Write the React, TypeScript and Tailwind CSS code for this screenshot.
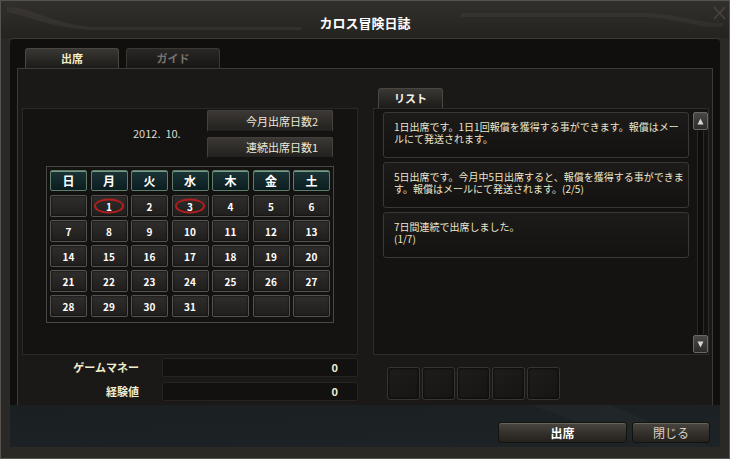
import React from "react";

const weeks: (number | null)[][] = [
  [null, 1, 2, 3, 4, 5, 6],
  [7, 8, 9, 10, 11, 12, 13],
  [14, 15, 16, 17, 18, 19, 20],
  [21, 22, 23, 24, 25, 26, 27],
  [28, 29, 30, 31, null, null, null],
];

const weekdays = ["日", "月", "火", "水", "木", "金", "土"];
const attended = [1, 3];

const listItems = [
  ["1日出席です。1日1回報償を獲得する事ができます。報償はメー", "ルにて発送されます。"],
  ["5日出席です。今月中5日出席すると、報償を獲得する事ができま", "す。報償はメールにて発送されます。(2/5)"],
  ["7日間連続で出席しました。", "(1/7)"],
];

const Tab = ({ label, active }: { label: string; active?: boolean }) => (
  <div
    className={`w-[94px] h-[20px] flex items-center justify-center rounded-t-[3px] border border-b-0 text-[11px] font-bold ${
      active
        ? "border-[#4a4743] bg-gradient-to-b from-[#3a3835] to-[#1d1b19] text-[#f2eec4]"
        : "border-[#3a3835] bg-gradient-to-b from-[#2a2826] to-[#181614] text-[#77746e]"
    }`}
  >
    {label}
  </div>
);

const HeaderCell = ({ label }: { label: string }) => (
  <div className="h-[21px] flex items-center justify-center rounded-[2px] border border-[#5f7d6b] bg-gradient-to-b from-[#1a3436] to-[#0c1d20] text-[12px] font-bold text-white shadow-[inset_0_1px_0_#7a9a88]">
    {label}
  </div>
);

const DayCell = ({ day }: { day: number | null }) => (
  <div className="relative h-[22px] flex items-center justify-center rounded-[2px] border border-[#55534f] bg-gradient-to-b from-[#302e2c] to-[#1f1e1c] text-[10px] font-bold text-white shadow-[inset_0_0_2px_#000]">
    {day}
    {day !== null && attended.includes(day) && (
      <span className="absolute left-1/2 top-1/2 w-[30px] h-[15px] -translate-x-1/2 -translate-y-1/2 rounded-[50%] border-2 border-[#b41e1e]" />
    )}
  </div>
);

const StatButton = ({ label }: { label: string }) => (
  <div className="h-full flex items-center justify-end pr-[14px] rounded-[2px] border border-[#45423e] border-b-[#111] bg-gradient-to-b from-[#3b3835] to-[#23211e] text-[11px] text-[#ede9d8]">
    {label}
  </div>
);

const ListItem = ({ lines }: { lines: string[] }) => (
  <div className="h-[46px] pl-[10px] pt-[8px] rounded-[3px] border border-[#3a3835] bg-gradient-to-b from-[#1d1b19] to-[#141210] text-[10px] leading-[12px] text-[#ebe6cc] whitespace-nowrap">
    <p>
      {lines[0]}
      <br />
      {lines[1]}
    </p>
  </div>
);

const ScrollButton = ({ up }: { up?: boolean }) => (
  <div className="w-[15px] h-[18px] flex items-center justify-center rounded-[2px] border border-[#6a6864] bg-gradient-to-b from-[#4a4845] to-[#2c2b29]">
    <svg width="7" height="7" viewBox="0 0 7 7">
      <path d={up ? "M3.5 0.5L6.5 6.5H0.5Z" : "M0.5 0.5H6.5L3.5 6.5Z"} fill="#d8d6d0" />
    </svg>
  </div>
);

const StatRow = ({ label, value }: { label: string; value: string }) => (
  <div className="flex items-center h-[19px]">
    <div className="w-[117px] text-right text-[11px] font-bold text-[#f0ecd0]">{label}</div>
    <div className="ml-[23px] w-[196px] h-full flex items-center justify-end pr-[19px] rounded-[2px] border border-[#262421] bg-[#121110] text-[11px] font-bold text-[#f0ecd0]">
      {value}
    </div>
  </div>
);

const Slot = () => (
  <div className="w-[33px] h-[33px] rounded-[3px] border border-[#3a342e] bg-gradient-to-br from-[#1f1d1b] to-[#171513] shadow-[inset_0_0_3px_#000]" />
);

const FooterButton = ({ label, bold, width }: { label: string; bold?: boolean; width: string }) => (
  <div
    className={`${width} h-[21px] flex items-center justify-center rounded-[3px] border border-[#14120f] bg-gradient-to-b from-[#4a4640] via-[#35322d] to-[#24211d] shadow-[inset_0_1px_0_#6a655c] text-[12px] ${
      bold ? "font-bold text-white" : "text-[#d6d2c8]"
    }`}
  >
    {label}
  </div>
);

export default function App() {
  return (
    <div className="w-[730px] h-[459px] flex flex-col bg-[#2b2926] border border-[#55534f] font-['Noto_Sans_CJK_JP',sans-serif] overflow-hidden">
      {/* title bar */}
      <div className="relative h-[37px] flex items-center justify-center pt-[7px] bg-gradient-to-b from-[#32302c] to-[#252320]">
        <svg className="absolute inset-0" width="728" height="37" viewBox="0 0 728 37">
          <path d="M6 6 C30 6 50 22 90 26 L300 26 L300 29 L90 29 C50 27 25 14 6 11 Z" fill="#4a4640" opacity="0.35" />
          <path d="M460 12 L640 12 C680 12 700 24 722 22 L722 25 C700 29 680 17 640 16 L460 16 Z" fill="#4a4640" opacity="0.3" />
          <path d="M713 6 L724 18 M724 6 L713 18" stroke="#6a665e" strokeWidth="1.5" opacity="0.45" />
        </svg>
        <span className="relative text-[13px] font-bold text-white">カロス冒険日誌</span>
      </div>

      {/* inner area */}
      <div className="flex-1 mx-[9px] flex flex-col bg-[#100f0e] border-t border-[#3c3a36] rounded-t-[4px]">
        <div className="flex gap-[7px] pl-[15px] pt-[9px]">
          <Tab label="出席" active />
          <Tab label="ガイド" />
        </div>

        {/* content frame */}
        <div className="mx-[7px] h-[337px] flex flex-col border border-b-0 border-[#3d3b37] bg-[#1b1917]">
          <div className="flex">
            {/* left column */}
            <div className="ml-[4px] w-[336px] pt-[39px]">
              <div className="h-[247px] border border-[#2b2926] bg-[#151311] pt-[1px]">
                <div className="flex h-[48px]">
                  <div className="w-[184px] flex items-center pl-[110px] pb-[2px] text-[11px] text-[#dcd8cc]">
                    2012.&nbsp;&nbsp;10.
                  </div>
                  <div className="w-[126px] flex flex-col gap-[5px]">
                    <div className="h-[22px]">
                      <StatButton label="今月出席日数2" />
                    </div>
                    <div className="h-[21px]">
                      <StatButton label="連続出席日数1" />
                    </div>
                  </div>
                </div>
                <div className="ml-[23px] mt-[8px] w-[288px] h-[157px] px-[3px] pt-[3px] border border-[#4a4844] bg-[#131210]">
                  <div className="grid grid-cols-7 gap-x-[3.5px]">
                    {weekdays.map((w) => (
                      <HeaderCell key={w} label={w} />
                    ))}
                  </div>
                  <div className="mt-[4px] grid grid-cols-7 gap-x-[3.5px] gap-y-[3px]">
                    {weeks.flat().map((d, i) => (
                      <DayCell key={i} day={d} />
                    ))}
                  </div>
                </div>
              </div>
              <div className="pt-[3px] flex flex-col gap-[5px]">
                <StatRow label="ゲームマネー" value="0" />
                <StatRow label="経験値" value="0" />
              </div>
            </div>

            {/* right column */}
            <div className="ml-[15px] w-[336px] pt-[19px]">
              <div className="ml-[5px] w-[65px] h-[20px] flex items-center justify-center rounded-t-[3px] border border-b-0 border-[#4a4743] bg-gradient-to-b from-[#3a3835] to-[#1d1b19] text-[11px] font-bold text-[#f4f2ea]">
                リスト
              </div>
              <div className="h-[247px] flex border border-[#2e2c29] bg-[#151311] pl-[9px] pt-[3px]">
                <div className="w-[307px] flex flex-col gap-[4px]">
                  {listItems.map((l, i) => (
                    <ListItem key={i} lines={l} />
                  ))}
                </div>
                <div className="ml-[4px] w-[15px] flex flex-col items-center">
                  <ScrollButton up />
                  <div className="flex-1 w-[7px] my-[1px] border-x border-[#2c2a27] bg-[#0e0d0c]" />
                  <div className="mb-[1px]">
                    <ScrollButton />
                  </div>
                </div>
              </div>
              <div className="ml-[14px] pt-[12px] flex gap-[2px]">
                <Slot />
                <Slot />
                <Slot />
                <Slot />
                <Slot />
              </div>
            </div>
          </div>
        </div>

        {/* footer */}
        <div className="relative flex-1 flex justify-end gap-[5px] pr-[10px] pt-[17px] bg-gradient-to-br from-[#1a2022] to-[#1d2326]">
          <svg className="absolute inset-0 pointer-events-none" width="710" height="42" viewBox="0 0 710 42">
            <path d="M520 0 L600 0 L700 42 L640 42 Z" fill="#2a3032" opacity="0.35" />
          </svg>
          <div className="relative flex gap-[5px]">
            <FooterButton label="出席" bold width="w-[129px]" />
            <FooterButton label="閉じる" width="w-[78px]" />
          </div>
        </div>
      </div>
      <div className="h-[11px]" />
    </div>
  );
}
